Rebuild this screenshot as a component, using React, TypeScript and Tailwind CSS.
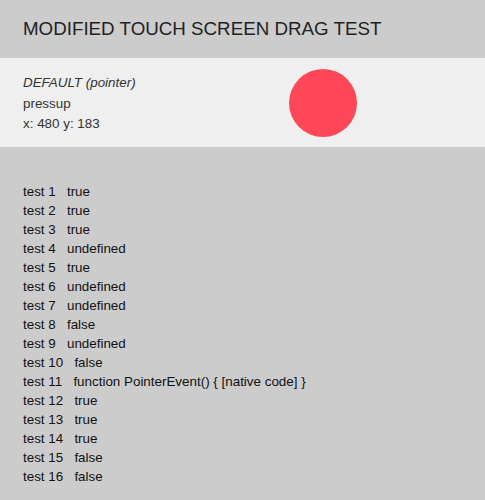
const tests: [string, string][] = [
  ["1", "true"],
  ["2", "true"],
  ["3", "true"],
  ["4", "undefined"],
  ["5", "true"],
  ["6", "undefined"],
  ["7", "undefined"],
  ["8", "false"],
  ["9", "undefined"],
  ["10", "false"],
  ["11", "function PointerEvent() { [native code] }"],
  ["12", "true"],
  ["13", "true"],
  ["14", "true"],
  ["15", "false"],
  ["16", "false"],
];

export default function App() {
  return (
    <div
      className="min-h-[500px] bg-[#cccccc] text-[#222]"
      style={{ fontFamily: '"Liberation Sans", Arial, sans-serif' }}
    >
      <header className="h-[58px] flex items-center px-[23px]">
        <h1 className="text-[18.75px] leading-none">MODIFIED TOUCH SCREEN DRAG TEST</h1>
      </header>

      <section className="h-[89px] bg-[#efefef] flex items-center px-[23px]">
        <div className="w-[266px] pt-[3px] text-[13.4px] leading-[20.5px] text-[#333]">
          <p className="italic">DEFAULT (pointer)</p>
          <p>pressup</p>
          <p>x: 480 y: 183</p>
        </div>
        <div className="w-[68px] h-[68px] rounded-full bg-[#ff4757]" />
      </section>

      <ul className="pt-[34.5px] px-[23px] text-[13.4px] leading-[19.07px] text-[#111]">
        {tests.map(([n, v]) => (
          <li key={n}>
            test {n}&nbsp;&nbsp;&nbsp;{v}
          </li>
        ))}
      </ul>
    </div>
  );
}
